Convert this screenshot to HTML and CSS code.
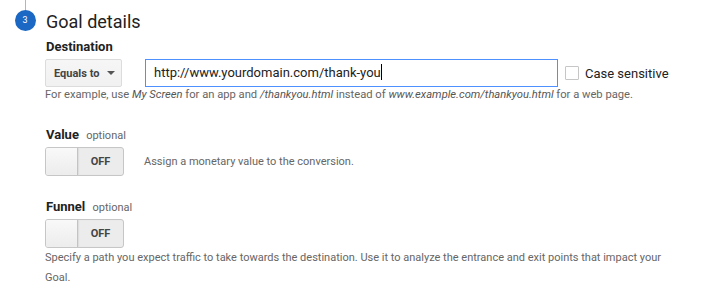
FILE: index.html
```html
<!DOCTYPE html>
<html>
<head>
	<title>Goal details</title>
	<link rel="stylesheet" href="styles.css">
</head>
<body>

<div class="goalStep">
	<div class="goalMarker">
		<div class="goalLine"></div>
		<div class="goalNumber">3</div>
	</div>
	<div class="goalBody">
		<h2 class="goalTitle">Goal details</h2>

		<div class="goalSection">
			<div class="goalLabel">Destination</div>
			<div class="goalRow">
				<button type="button" class="goalSelect">Equals to <span class="goalArrow"></span></button>
				<div class="goalInput">http://www.yourdomain.com/thank-you<span class="goalCaret"></span></div>
				<span class="goalCheck"></span>
				<span class="goalCheckLabel">Case sensitive</span>
			</div>
			<p class="goalHelp goalHelpTight">For example, use <i>My Screen</i> for an app and <i>/thankyou.html</i> instead of <i>www.example.com/thankyou.html</i> for a web page.</p>
		</div>

		<div class="goalSection goalValue">
			<div class="goalLabel">Value <span class="goalOptional">optional</span></div>
			<div class="goalRow">
				<div class="goalToggle"><span class="goalKnob"></span><span class="goalOff">OFF</span></div>
				<p class="goalHelp goalHelpSide">Assign a monetary value to the conversion.</p>
			</div>
		</div>

		<div class="goalSection goalFunnel">
			<div class="goalLabel">Funnel <span class="goalOptional">optional</span></div>
			<div class="goalToggle"><span class="goalKnob"></span><span class="goalOff">OFF</span></div>
			<p class="goalHelp goalHelpWide">Specify a path you expect traffic to take towards the destination. Use it to analyze the entrance and exit points that impact your Goal.</p>
		</div>
	</div>
</div>

</body>
</html>
```

FILE: styles.css
```css
body {margin: 0;background: #fff;font-family: Roboto, Arial, sans-serif;color: #222;}

.goalStep {display: flex;}
.goalMarker {width: 50px;margin-right: -5px;flex: none;display: flex;flex-direction: column;align-items: center;}
.goalLine {width: 1px;height: 10px;background: #b5b5b5;}
.goalNumber {
	width: 21px;
	height: 21px;
	border-radius: 50%;
	background: #1a67c4;
	color: #fff;
	font-size: 9px;
	line-height: 21px;
	text-align: center;
}

.goalBody {flex: 1;padding-right: 20px;}
.goalTitle {margin: 11px 0 0 1px;font-size: 18px;font-weight: 400;line-height: 22px;color: #222;}

.goalSection {padding-top: 6px;}
.goalLabel {font-size: 13px;font-weight: bold;line-height: 16px;margin-left: 1px;color: #222;}
.goalOptional {font-size: 11px;font-weight: normal;color: #666;margin-left: 4px;}

.goalRow {display: flex;align-items: center;margin-top: 4px;white-space: nowrap;}
.goalRow > * {flex: none;}

.goalSelect {
	width: 77px;
	height: 28px;
	padding: 0 0 0 8px;
	border: 1px solid #dcdcdc;
	border-radius: 2px;
	background: linear-gradient(#f6f6f6, #f1f1f1);
	font-family: Roboto, Arial, sans-serif;
	font-size: 11px;
	font-weight: bold;
	color: #444;
	text-align: left;
}
.goalArrow {display: inline-block;margin-left: 5px;vertical-align: 2px;border-left: 4px solid transparent;border-right: 4px solid transparent;border-top: 4px solid #555;}

.goalInput {
	width: 413px;
	height: 28px;
	box-sizing: border-box;
	margin-left: 23px;
	padding-left: 8px;
	border: 1px solid #4d90fe;
	font-size: 13px;
	line-height: 26px;
	color: #222;
}
.goalCaret {display: inline-block;width: 1px;height: 16px;background: #000;vertical-align: -3px;}

.goalCheck {width: 12px;height: 12px;margin-left: 7px;border: 1px solid #c6c6c6;border-radius: 1px;background: #fff;}
.goalCheckLabel {margin-left: 6px;font-size: 13px;color: #222;}

.goalHelp {margin: 0;font-size: 11.2px;line-height: 14px;color: #666;}
.goalHelp i {color: #555;}
.goalHelpTight {margin-top: 1px;}

.goalValue {margin-top: 19px;}
.goalValue .goalRow {margin-top: 3px;}
.goalHelpSide {margin-left: 20px;font-size: 11px;}

.goalToggle {
	display: flex;
	width: 77px;
	height: 27px;
	border: 1px solid #c6c6c6;
	border-radius: 3px;
	overflow: hidden;
	background: #ececec;
}
.goalKnob {width: 31px;border-right: 1px solid #c3c3c3;background: linear-gradient(#f9f9f9, #ececec);box-shadow: inset 0 0 1px #fff;}
.goalOff {flex: 1;text-align: center;font-size: 11px;font-weight: bold;line-height: 27px;color: #444;box-shadow: inset 1px 0 1px #ddd;}

.goalFunnel {margin-top: 17px;}
.goalFunnel .goalToggle {margin-top: 3px;}
.goalHelpWide {font-size: 11px;line-height: 20px;margin-top: 0;}
```
